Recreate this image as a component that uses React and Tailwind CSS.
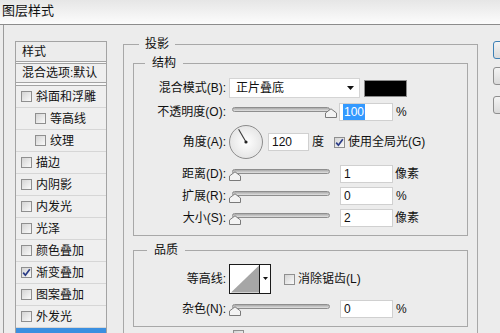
const font = "font-['Liberation_Sans','Noto_Sans_CJK_SC',sans-serif]";

function Box({ checked }) {
  return (
    <span className="flex h-[11px] w-[11px] shrink-0 items-center justify-center border border-[#8f8f8f] bg-linear-to-br from-[#d4d4d4] to-[#fafafa]">
      {checked && (
        <svg width="9" height="9" viewBox="0 0 9 9">
          <path d="M1.2 4.6 L3.4 7.2 L7.8 1.2" stroke="#2a3b86" strokeWidth="1.7" fill="none" />
        </svg>
      )}
    </span>
  );
}

function Thumb() {
  return (
    <svg width="12" height="10" viewBox="0 0 12 10">
      <path d="M0.5 9.5 V5 L6 0.8 L11.5 5 V9.5 Z" fill="#f3f3f3" stroke="#7a7a7a" />
    </svg>
  );
}

function Slider({ right }) {
  return (
    <div className="relative h-[18px] w-[108px] shrink-0">
      <div className="absolute left-[3px] top-[4px] h-[5px] w-[98px] rounded-full border border-[#8e8e8e] bg-linear-to-b from-[#a9a9a9] to-[#e2e2e2]" />
      <div className={right ? "absolute left-[96px] top-[5px]" : "absolute left-0 top-[6px]"}>
        <Thumb />
      </div>
    </div>
  );
}

function Field({ value, selected, w = "w-[53px]" }) {
  return (
    <div className={`${w} flex h-[18px] shrink-0 items-center border border-[#d0d0d0] bg-white pl-[3px] text-[12px]`}>
      {selected ? <span className="bg-[#3399ff] px-[1px] text-white">{value}</span> : value}
    </div>
  );
}

function Label({ children }) {
  return <div className="w-[93px] shrink-0 pr-[1px] text-right">{children}</div>;
}

const layers = [
  { name: "斜面和浮雕" },
  { name: "等高线", sub: true },
  { name: "纹理", sub: true },
  { name: "描边" },
  { name: "内阴影" },
  { name: "内发光" },
  { name: "光泽" },
  { name: "颜色叠加" },
  { name: "渐变叠加", checked: true },
  { name: "图案叠加" },
  { name: "外发光" },
];

export default function App() {
  return (
    <div className={`${font} h-[333px] w-[500px] overflow-hidden bg-[#ececec] text-[12px] leading-4 text-[#111]`}>
      <div className="h-[25px] border-b border-[#8c8c8c] bg-linear-to-b from-[#e6e6e6] to-[#fcfcfc] pl-[2px] text-[13px] leading-[22px]">
        图层样式
      </div>

      <div className="ml-[3px] flex h-[308px] items-start border-l border-[#9b9b9b] pl-[11px] pt-[11px]">
        {/* left list */}
        <div className="mt-[5px] w-[92px] shrink-0 border border-[#a3a3a3] bg-[#efefef]">
          <div className="flex h-[20px] items-center border-b border-[#a3a3a3] bg-[#ececec] pl-[6px]">样式</div>
          <div className="h-[1px] bg-[#f8f8f8]" />
          <div className="flex h-[20px] items-center border-y border-[#a3a3a3] pl-[6px]">混合选项:默认</div>
          <div className="h-[2px] bg-[#f8f8f8]" />
          <div className="border-t border-[#a3a3a3]">
            {layers.map((l) => (
              <div key={l.name} className="flex h-[22px] items-center border-b border-[#d6d6d6]">
                <div className={l.sub ? "ml-[19px]" : "ml-[5px]"}>
                  <Box checked={l.checked} />
                </div>
                <span className="ml-[4px]">{l.name}</span>
              </div>
            ))}
            <div className="h-[22px] bg-[#3b8fe0]" />
          </div>
        </div>

        {/* main settings */}
        <fieldset className="ml-[16px] w-[355px] min-w-0 shrink-0 border border-[#a8a8a8] px-[9px] pt-[3px]">
          <legend className="ml-[6px] px-[6px] leading-4">投影</legend>

          <fieldset className="min-w-0 border border-[#a8a8a8] pb-[8px] pt-[7px]">
            <legend className="ml-[11px] px-[7px] leading-4">结构</legend>

            <div className="flex h-[20px] items-center">
              <Label>混合模式(B):</Label>
              <div className="ml-[2px] flex h-[20px] w-[131px] items-center justify-between border border-[#d4d4d4] bg-white pl-[6px] pr-[5px]">
                <span>正片叠底</span>
                <svg width="7" height="4" viewBox="0 0 7 4">
                  <path d="M0 0 H7 L3.5 4 Z" fill="#111" />
                </svg>
              </div>
              <div className="ml-[4px] h-[17px] w-[43px] border border-[#8a8a8a] bg-black" />
            </div>

            <div className="mt-[5px] flex h-[18px] items-center">
              <Label>不透明度(O):</Label>
              <div className="ml-[2px]">
                <Slider right />
              </div>
              <div className="ml-[2px]">
                <Field value="100" selected w="w-[54px]" />
              </div>
              <span className="ml-[3px]">%</span>
            </div>

            <div className="mt-[4px] flex h-[34px] items-center">
              <Label>角度(A):</Label>
              <div className="ml-[2px] h-[34px] w-[34px] shrink-0 rounded-full border border-[#8c8c8c] bg-radial from-white to-[#dcdcdc]">
                <svg width="32" height="32" viewBox="0 0 32 32">
                  <line x1="16" y1="16" x2="8.6" y2="3.2" stroke="#3a3a3a" strokeWidth="1.1" />
                  <circle cx="16" cy="16" r="1.6" fill="#222" />
                </svg>
              </div>
              <div className="ml-[5px]">
                <Field value="120" w="w-[41px]" />
              </div>
              <span className="ml-[3px]">度</span>
              <div className="ml-[10px]">
                <Box checked />
              </div>
              <span className="ml-[3px]">使用全局光(G)</span>
            </div>

            <div className="mt-[6px] flex h-[18px] items-center">
              <Label>距离(D):</Label>
              <div className="ml-[2px]">
                <Slider />
              </div>
              <div className="ml-[3px]">
                <Field value="1" />
              </div>
              <span className="ml-[2px]">像素</span>
            </div>

            <div className="mt-[4px] flex h-[18px] items-center">
              <Label>扩展(R):</Label>
              <div className="ml-[2px]">
                <Slider />
              </div>
              <div className="ml-[3px]">
                <Field value="0" />
              </div>
              <span className="ml-[3px]">%</span>
            </div>

            <div className="mt-[4px] flex h-[18px] items-center">
              <Label>大小(S):</Label>
              <div className="ml-[2px]">
                <Slider />
              </div>
              <div className="ml-[3px]">
                <Field value="2" />
              </div>
              <span className="ml-[2px]">像素</span>
            </div>
          </fieldset>

          <fieldset className="mt-[6px] min-w-0 border border-[#a8a8a8] pb-[8px] pt-[6px]">
            <legend className="ml-[13px] px-[7px] leading-4">品质</legend>

            <div className="flex h-[30px] items-center">
              <Label>等高线:</Label>
              <div className="ml-[2px] flex h-[30px] w-[42px] border border-[#1a1a1a] bg-white">
                <svg width="30" height="28" viewBox="0 0 30 28" className="border-r border-[#1a1a1a]">
                  <path d="M1 28 L30 0 V28 Z" fill="#a6a6a6" />
                </svg>
                <div className="flex flex-1 items-center justify-center pb-[2px]">
                  <svg width="5" height="3" viewBox="0 0 5 3">
                    <path d="M0 0 H5 L2.5 3 Z" fill="#111" />
                  </svg>
                </div>
              </div>
              <div className="ml-[13px]">
                <Box />
              </div>
              <span className="ml-[3px]">消除锯齿(L)</span>
            </div>

            <div className="mt-[6px] flex h-[18px] items-center">
              <Label>杂色(N):</Label>
              <div className="ml-[2px]">
                <Slider />
              </div>
              <div className="ml-[3px]">
                <Field value="0" />
              </div>
              <span className="ml-[3px]">%</span>
            </div>
          </fieldset>

          <div className="ml-[100px] mt-[3px] flex items-center">
            <Box />
          </div>
        </fieldset>

        {/* buttons */}
        <div className="ml-[15px] mt-[5px] flex w-[60px] shrink-0 flex-col">
          <div className="h-[18px] rounded-[3px] border border-[#3d80b5] bg-linear-to-b from-[#f4f4f4] to-[#dadada]" />
          <div className="mt-[8px] h-[18px] rounded-[3px] border border-[#8e8e8e] bg-linear-to-b from-[#f4f4f4] to-[#dadada]" />
          <div className="mt-[11px] h-[18px] rounded-[3px] border border-[#8e8e8e] bg-linear-to-b from-[#f4f4f4] to-[#dadada]" />
        </div>
      </div>
    </div>
  );
}
